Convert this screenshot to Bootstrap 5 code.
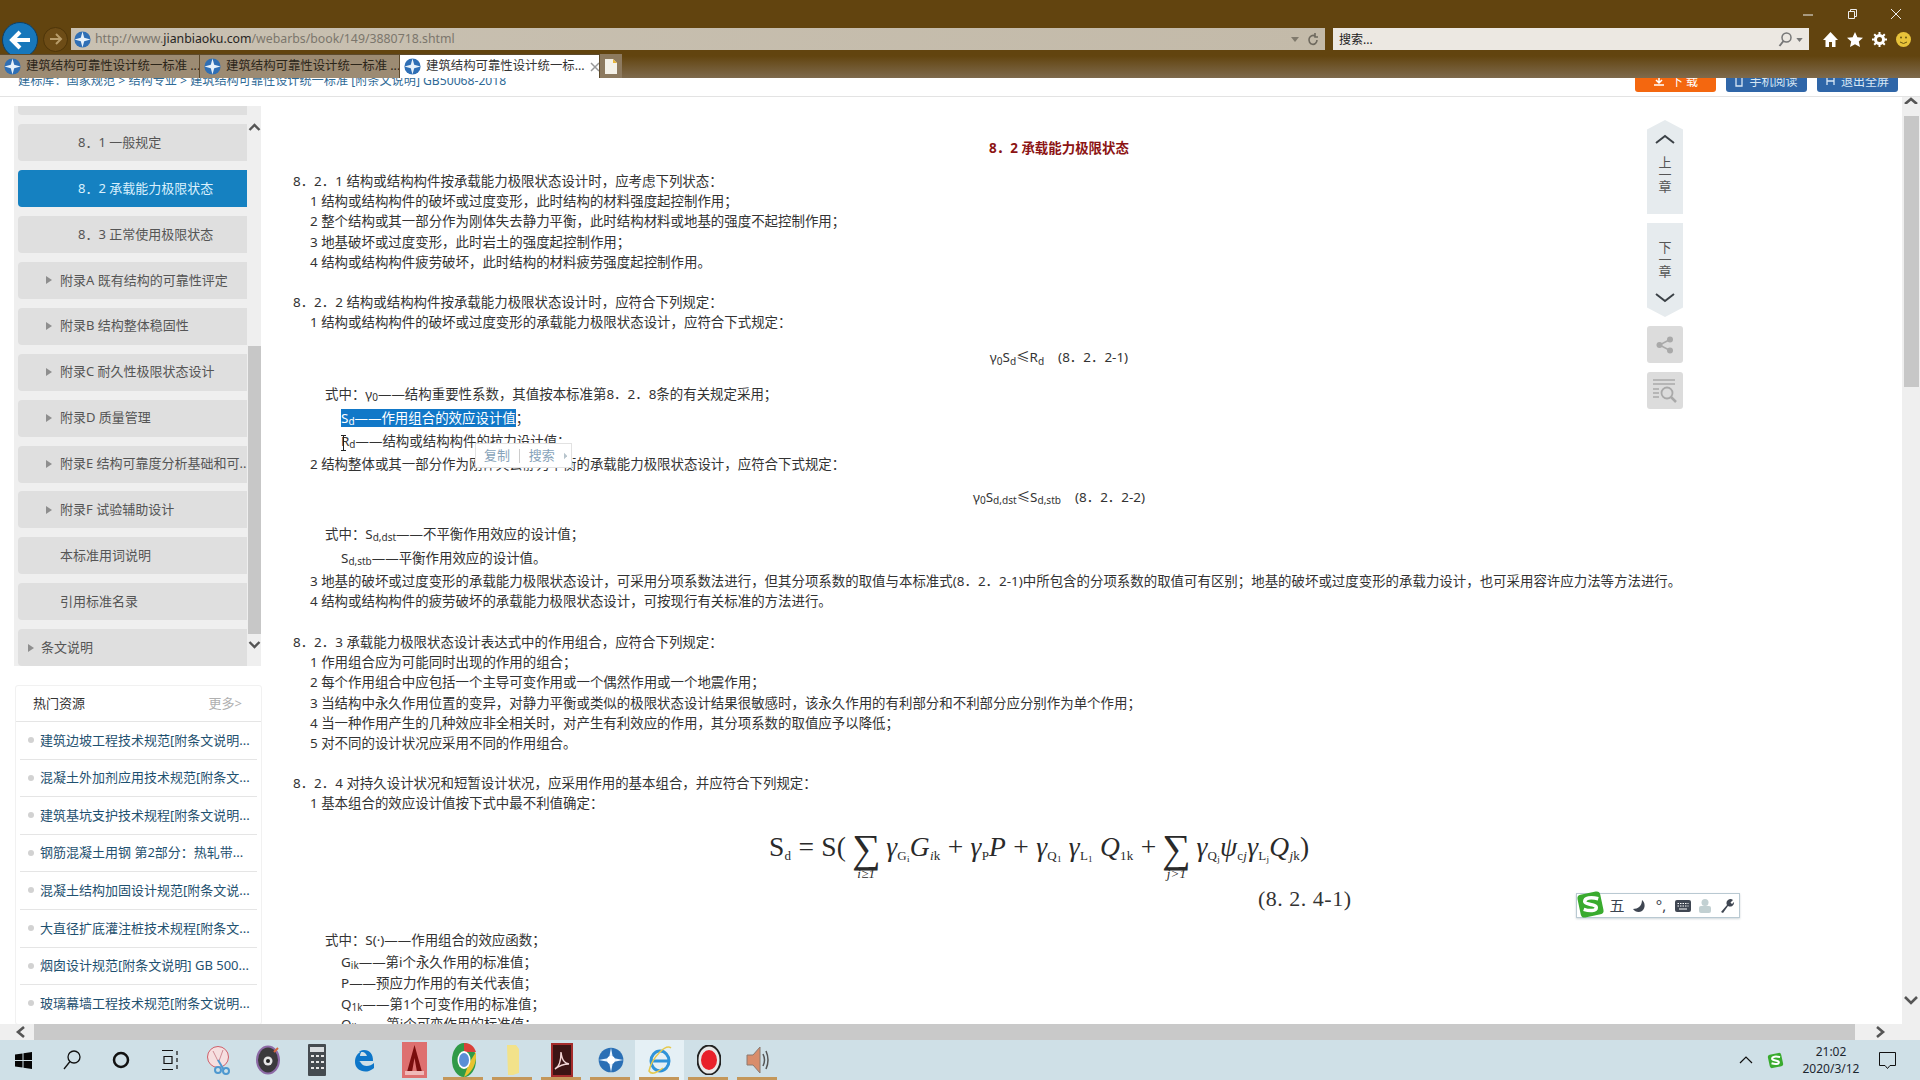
<!DOCTYPE html>
<html lang="zh">
<head>
<meta charset="utf-8">
<title>建筑结构可靠性设计统一标准</title>
<link rel="stylesheet" href="https://cdn.jsdelivr.net/npm/bootstrap@5.3.0/dist/css/bootstrap.min.css">
<style>
html,body{height:1080px;overflow:hidden}
body{width:1920px;font-family:"Noto Sans","Noto Sans CJK SC",sans-serif;font-size:13px;color:#333;background:#fff}
.shell{width:1920px;height:1080px}
.ie{height:78px;flex:none;background:linear-gradient(#62440f 0,#62440f 56px,#7e6a4d 78px)}
.winrow{height:28px;padding-right:18px;gap:32px;color:#e8e4dc}
.addr{height:22px;overflow:visible}
.backb{width:36px;height:36px;margin:-6px 5px -8px 2px;border-radius:50%;background:#1777bb;border:1px solid #0c3f66}
.fwdb{width:25px;height:25px;margin-right:3px;border-radius:50%;background:#6d4c16;border:1px solid #4e3509}
.urlbox{width:1254px;height:22px;background:linear-gradient(90deg,#c9c1b2,#c3baa9);padding:1px 6px 0 3px;font-size:12.3px;color:#7b766c}
.urlbox b{font-weight:400;color:#26241f}
.srch{width:476px;height:22px;margin-left:8px;background:#ece8e2;padding:1px 6px 0;font-size:12px;color:#222}
.tools{gap:9px;margin-left:14px}
.tabs{height:24px;margin-top:4px}
.tabx{width:200px;height:24px;background:#9c8b73;border-right:1px solid #5d4a2c;border-top:1px solid #5d4a2c;font-size:12.4px;color:#2b2519;padding:0 0 0 4px;gap:5px;white-space:nowrap}
.tabx.on{background:#fff;color:#333}
.newt{width:22px;height:24px;background:#8d7a5f}
.pg{flex:1 1 auto;min-height:0;overflow:hidden}
.crumb{height:19px;flex:none;border-bottom:1px solid #e3e3e3;padding-left:18px;overflow:hidden;color:#2f6a96;font-size:12.15px;white-space:nowrap}
.ctext{margin-top:-6px}
.topbtn{height:14px;width:81px;border-radius:0 0 3px 3px;background:#2f66a8;color:#d8e6f4;font-size:12px;line-height:8px;overflow:hidden;gap:6px}
.topbtn>*{margin-top:-6px}
.topbtn.or{background:#f4670f;color:#fff}
.btns{margin-left:auto;gap:10px;margin-right:22px;align-items:flex-start}
.mainr{flex:1 1 auto;min-height:0;overflow:hidden}
.lcol{width:247px;margin-left:14px;flex:none}
.sb{height:560px;margin-top:9px;background:#efefef;overflow:hidden}
.sblist{width:229px;margin:-28px 0 0 4px;gap:8.95px}
.sbi{height:37px;flex:none;background:#dfdfdf;border-radius:4px 0 0 4px;color:#555;font-size:13px;padding:0;white-space:nowrap;overflow:hidden}
.sbi.l1{padding-left:42px}
.sbi.lv{padding-left:60px}
.sbi.on{background:#1581c1;color:#d9f0fd}
.sbi.top{padding-left:10px}
.tri{width:0;height:0;border-left:6px solid #8e8e8e;border-top:4px solid transparent;border-bottom:4px solid transparent;margin-left:-14px;margin-right:8px}
.sbi.top .tri{margin-left:0;margin-right:7px}
.sbar{width:13px;margin-left:1px}
.sbar svg{display:block}
.sa1{margin:14px 0 -2px}
.sthumb{height:288px;width:13px;background:#c7c7c7;margin-top:214px}
.hot{margin-top:19px;border:1px solid #f1f1f1;border-radius:3px;height:340px;overflow:hidden;margin-left:1px;margin-right:-1px}
.hothd{height:36px;padding:0 19px 0 17px;border-bottom:1px solid #e5e5e5;border-radius:0;background:#fff;font-size:13px;color:#333}
.hothd span+span{color:#b0b0b0}
.hotli{margin:0 4px}
.hotit{height:37.6px;padding:0 0 0 20px;border-color:#e5e5e5;color:#1f5170;font-size:13px;white-space:nowrap;position:relative;overflow:hidden}
.hotit::before{content:"";position:absolute;left:8px;top:15px;width:6px;height:6px;border-radius:50%;background:#d2d2d2}
.art{width:1532px;margin-left:32px;flex:none;position:relative;color:#333;font-size:13.45px}
.ttl{height:20px;margin-top:41px;margin-bottom:13px;font-weight:700;color:#8c1414;text-align:center}
.ln{height:20.2px;line-height:20px;white-space:nowrap}
.tall{height:23.4px;line-height:23px}
.i1{padding-left:17px}.i2{padding-left:32px}.i3{padding-left:48px}
.gap{margin-top:20px}.gap2{margin-top:21px}
.ln sub{font-size:10px;bottom:-.2em}
.fx{height:36px;line-height:36px;text-align:center;white-space:nowrap}
.fx1{margin-top:7px}.fx2{margin-top:2px}
.m8{margin-top:8px}.m1{margin-top:1px}
.sel{background:#1178c8;color:#fff}
.frm{height:60px;margin-left:476px;margin-top:3px;font-family:"Liberation Serif",serif;font-size:27.5px;line-height:1;white-space:nowrap;color:#2a2a2a;gap:1px;letter-spacing:.25px}
.frm i{font-style:italic}
.frm sub{font-size:13px;bottom:-.3em}
.frm sub sub{font-size:9px}
.sig{width:34px;margin:0 2px;position:relative;top:9px;font-size:40px;line-height:36px;text-align:center}
.sig small{display:block;font-size:13px;line-height:13px;font-style:italic}
.enum{height:22px;margin-left:965px;margin-top:11px;font-family:"Liberation Serif",serif;font-size:22px;line-height:22px;color:#333;letter-spacing:.5px}
.c0{margin-top:19px}
.h22{height:22px;line-height:22px}
.h21{height:21px;line-height:21px}
.vbar{width:18px;flex:none;background:#efefef;margin-left:auto}
.va1{display:block}
.vthumb{width:15px;height:271px;margin:12px 0 0 2px;background:#c7c7c7}
.va2{display:block;margin-top:609px}
.hbar{height:16px;flex:none;background:#efefef}
.hthumb{width:1821px;height:16px;background:#c9c9c9}
.task{height:40px;flex:none;background:#cfe0e7}
.slot{width:49px;height:40px;flex:none;position:relative}
.slot.fst{width:47px}
.slot.run::after{content:"";position:absolute;left:4px;right:5px;bottom:0;height:3px;background:#c4975a}
.slot.cur{background:#e5f0f5}
.tray{margin-left:auto;padding-right:24px;font-size:12px;line-height:17px;color:#1d2730}
.trya{margin-right:14px}.trys{margin-right:5px}.tryn{margin-left:6px}
.clock{width:84px;text-align:center;font-size:12px}
.rail{position:absolute;left:1354px;top:23px;width:36px;gap:9px;color:#555}
.chap{height:94px;background:#e6ebee;font-size:13px;line-height:12px;text-align:center}
.chap.up{clip-path:polygon(50% 0,100% 10%,100% 100%,0 100%,0 10%);padding-top:14px}
.chap.dn{clip-path:polygon(0 0,100% 0,100% 90%,50% 100%,0 90%);padding-top:18px}
.chap span{display:block}
.cu{margin-bottom:12px}.cd{margin-top:16px}
.rbox{height:37px;background:#dcdcdc;border-radius:3px}
.pop{position:absolute;left:182px;top:346px;width:97px;height:25px;background:#fff;border:1px solid #e2e2e2;color:#88a4ba;font-size:13px;padding:0 4px 0 8px;gap:9px;white-space:nowrap}
.pop i{width:1px;height:14px;background:#ccc}
.caret{position:absolute;left:47px;top:338px}
.ime{position:absolute;left:1283px;top:796px;width:164px;height:25px;background:#fff;border:1px solid #b9c9d2;color:#3c4450;font-size:15px;gap:6px;padding-left:32px;box-shadow:0 1px 2px #cfd6da}
.ime>*{width:16px;flex:none;text-align:center}
.imelogo{position:absolute;left:1283px;top:793px}
</style>
</head>
<body>
<svg width="0" height="0" class="d-block position-absolute">
<symbol id="globe" viewBox="0 0 20 20"><circle cx="10" cy="10" r="9.500" fill="#2f6fb5"/><path d="M10 .5 12 8l7.500 2-7.500 2-2 7.500L8 12 .5 10 8 8z" fill="#e8f2fb"/></symbol>
<symbol id="ss" viewBox="0 0 30 30"><rect x="3" y="3" width="24" height="24" rx="4" fill="#39ab2e" transform="rotate(-12 15 15)"/><path d="M23 9c-8-2-14-1-14 3s12 2 12 6-7 4-13 2" fill="none" stroke="#fff" stroke-width="3.600"/></symbol>
</svg>
<div class="shell d-flex flex-column">

<div class="ie">
  <div class="winrow d-flex align-items-center justify-content-end">
    <svg width="12" height="12" viewBox="0 0 12 12"><path d="M1 7h10" stroke="#eee" stroke-width="1"/></svg>
    <svg width="12" height="12" viewBox="0 0 12 12"><path d="M2.500 3.500h6v7h-6zM4.500 3.500v-2h6v7h-2" fill="none" stroke="#eee"/></svg>
    <svg width="12" height="12" viewBox="0 0 12 12"><path d="M1 1l10 10M11 1 1 11" stroke="#eee"/></svg>
  </div>
  <div class="addr d-flex align-items-center">
    <div class="backb d-flex align-items-center justify-content-center flex-shrink-0"><svg width="24" height="22" viewBox="0 0 24 22"><path d="M12 3 4 11l8 8M4 11h18" fill="none" stroke="#fff" stroke-width="4"/></svg></div>
    <div class="fwdb d-flex align-items-center justify-content-center flex-shrink-0"><svg width="15" height="14" viewBox="0 0 15 14"><path d="M8 2l5 5-5 5M13 7H2" fill="none" stroke="#b89c6a" stroke-width="2"/></svg></div>
    <div class="urlbox d-flex align-items-center flex-shrink-0">
      <svg width="17" height="17" class="me-1"><use href="#globe"/></svg>
      <span>http://www.<b>jianbiaoku.com</b>/webarbs/book/149/3880718.shtml</span>
      <span class="ms-auto d-flex align-items-center gap-2"><svg width="8" height="5" viewBox="0 0 8 5"><path d="M0 0h8L4 5z" fill="#807a6d"/></svg><svg width="12" height="14" viewBox="0 0 12 14"><path d="M10 7a4 4.500 0 1 1-2-4M8 0v4h3" fill="none" stroke="#6e695e" stroke-width="1.600"/></svg></span>
    </div>
    <div class="srch d-flex align-items-center flex-shrink-0"><span>搜索...</span>
      <span class="ms-auto d-flex align-items-center gap-1"><svg width="14" height="15" viewBox="0 0 14 15"><circle cx="8.500" cy="5.500" r="4.500" fill="none" stroke="#777" stroke-width="1.500"/><path d="M5.500 9 1.500 14" stroke="#777" stroke-width="2"/></svg><svg width="7" height="4" viewBox="0 0 8 5"><path d="M0 0h8L4 5z" fill="#777"/></svg></span></div>
    <div class="tools d-flex align-items-center">
      <svg width="15" height="15" viewBox="0 0 15 15"><path d="M7.500 0 15 8h-2.500v7H9v-5H6v5H2.500V8H0z" fill="#fff"/></svg>
      <svg width="16" height="15" viewBox="0 0 16 15"><path d="m8 0 2.400 5.200 5.600.600-4.200 3.800 1.200 5.400L8 12.200 3 15l1.200-5.400L0 5.800l5.600-.600z" fill="#fff"/></svg>
      <svg width="15" height="15" viewBox="0 0 15 15"><circle cx="7.500" cy="7.500" r="4" fill="none" stroke="#fff" stroke-width="3"/><path d="M7.500 0v15M0 7.500h15M2.200 2.200l10.600 10.600M12.800 2.200 2.200 12.800" stroke="#fff" stroke-width="2"/><circle cx="7.500" cy="7.500" r="2.500" fill="#62440f"/></svg>
      <svg width="15" height="17" viewBox="0 0 15 17"><circle cx="7.500" cy="8.500" r="7.500" fill="#e8c33a"/><circle cx="5" cy="6.500" r="1" fill="#6b5610"/><circle cx="10" cy="6.500" r="1" fill="#6b5610"/><path d="M4 11q3.500 3 7 0" fill="none" stroke="#6b5610"/></svg>
    </div>
  </div>
  <div class="tabs d-flex">
    <div class="tabx d-flex align-items-center overflow-hidden"><svg width="17" height="17" class="flex-shrink-0"><use href="#globe"/></svg><span>建筑结构可靠性设计统一标准 ...</span></div>
    <div class="tabx d-flex align-items-center overflow-hidden"><svg width="17" height="17" class="flex-shrink-0"><use href="#globe"/></svg><span>建筑结构可靠性设计统一标准 ...</span></div>
    <div class="tabx on d-flex align-items-center overflow-hidden"><svg width="17" height="17" class="flex-shrink-0"><use href="#globe"/></svg><span>建筑结构可靠性设计统一标...</span><svg width="10" height="10" viewBox="0 0 10 10" class="flex-shrink-0"><path d="M1 1l8 8M9 1 1 9" stroke="#999" stroke-width="1.500"/></svg></div>
    <div class="newt d-flex align-items-center justify-content-center"><svg width="12" height="15" viewBox="0 0 12 15"><path d="M0 0h8l4 4v11H0z" fill="#f4f1e8"/><path d="M8 0l4 4H8z" fill="#e8b53a"/></svg></div>
  </div>
</div>

<div class="pg d-flex flex-column">
  <div class="crumb d-flex">
    <div class="ctext">建标库：国家规范 &gt; 结构专业 &gt; 建筑结构可靠性设计统一标准 [附条文说明] GB50068-2018</div>
    <div class="btns d-flex">
      <div class="topbtn or d-flex align-items-center justify-content-center"><svg width="12" height="8" viewBox="0 0 12 8"><path d="M6 0v4M3 2l3 3 3-3M1 7h10" fill="none" stroke="#fff" stroke-width="1.500"/></svg><span>下 载</span></div>
      <div class="topbtn d-flex align-items-center justify-content-center"><svg width="8" height="9" viewBox="0 0 8 9"><path d="M1 0v8h6V0" fill="none" stroke="#d8e6f4" stroke-width="1.300"/></svg><span>手机阅读</span></div>
      <div class="topbtn d-flex align-items-center justify-content-center"><svg width="9" height="8" viewBox="0 0 9 8"><path d="M1 0v7M8 0v7M1 3h7" fill="none" stroke="#d8e6f4" stroke-width="1.300"/></svg><span>退出全屏</span></div>
    </div>
  </div>
  <div class="mainr d-flex">
    <div class="lcol">
      <div class="sb d-flex">
        <div class="sblist nav flex-column flex-nowrap flex-shrink-0">
          <a class="sbi nav-link d-flex align-items-center lv"></a>
          <a class="sbi nav-link d-flex align-items-center lv">8．1 一般规定</a>
          <a class="sbi nav-link d-flex align-items-center lv on">8．2 承载能力极限状态</a>
          <a class="sbi nav-link d-flex align-items-center lv">8．3 正常使用极限状态</a>
          <a class="sbi nav-link d-flex align-items-center l1"><i class="tri"></i>附录A 既有结构的可靠性评定</a>
          <a class="sbi nav-link d-flex align-items-center l1"><i class="tri"></i>附录B 结构整体稳固性</a>
          <a class="sbi nav-link d-flex align-items-center l1"><i class="tri"></i>附录C 耐久性极限状态设计</a>
          <a class="sbi nav-link d-flex align-items-center l1"><i class="tri"></i>附录D 质量管理</a>
          <a class="sbi nav-link d-flex align-items-center l1"><i class="tri"></i>附录E 结构可靠度分析基础和可...</a>
          <a class="sbi nav-link d-flex align-items-center l1"><i class="tri"></i>附录F 试验辅助设计</a>
          <a class="sbi nav-link d-flex align-items-center l1">本标准用词说明</a>
          <a class="sbi nav-link d-flex align-items-center l1">引用标准名录</a>
          <a class="sbi nav-link d-flex align-items-center top"><i class="tri"></i>条文说明</a>
        </div>
        <div class="sbar">
          <svg class="sa1" width="13" height="14" viewBox="0 0 13 14"><path d="M1.500 10 6.500 5l5 5" fill="none" stroke="#555" stroke-width="2.400"/></svg>
          <div class="sthumb"></div>
          <svg width="13" height="14" viewBox="0 0 13 14" class="mt-1"><path d="M1.500 4l5 5 5-5" fill="none" stroke="#555" stroke-width="2.400"/></svg>
        </div>
      </div>
      <div class="hot card">
        <div class="hothd card-header d-flex align-items-center justify-content-between"><span>热门资源</span><span>更多&gt;</span></div>
        <div class="hotli list-group list-group-flush">
          <a class="hotit list-group-item d-flex align-items-center">建筑边坡工程技术规范[附条文说明...</a>
          <a class="hotit list-group-item d-flex align-items-center">混凝土外加剂应用技术规范[附条文...</a>
          <a class="hotit list-group-item d-flex align-items-center">建筑基坑支护技术规程[附条文说明...</a>
          <a class="hotit list-group-item d-flex align-items-center">钢筋混凝土用钢 第2部分：热轧带...</a>
          <a class="hotit list-group-item d-flex align-items-center">混凝土结构加固设计规范[附条文说...</a>
          <a class="hotit list-group-item d-flex align-items-center">大直径扩底灌注桩技术规程[附条文...</a>
          <a class="hotit list-group-item d-flex align-items-center">烟囱设计规范[附条文说明] GB 500...</a>
          <a class="hotit list-group-item d-flex align-items-center">玻璃幕墙工程技术规范[附条文说明...</a>
        </div>
      </div>
    </div>

    <div class="art">
      <div class="ttl">8．2 承载能力极限状态</div>
      <div class="ln">8．2．1 结构或结构构件按承载能力极限状态设计时，应考虑下列状态：</div>
      <div class="ln i1">1 结构或结构构件的破坏或过度变形，此时结构的材料强度起控制作用；</div>
      <div class="ln i1">2 整个结构或其一部分作为刚体失去静力平衡，此时结构材料或地基的强度不起控制作用；</div>
      <div class="ln i1">3 地基破坏或过度变形，此时岩土的强度起控制作用；</div>
      <div class="ln i1">4 结构或结构构件疲劳破坏，此时结构的材料疲劳强度起控制作用。</div>
      <div class="ln gap">8．2．2 结构或结构构件按承载能力极限状态设计时，应符合下列规定：</div>
      <div class="ln i1">1 结构或结构构件的破坏或过度变形的承载能力极限状态设计，应符合下式规定：</div>
      <div class="fx fx1">γ<sub>0</sub>S<sub>d</sub>≤R<sub>d</sub> &nbsp;&nbsp; (8．2．2-1)</div>
      <div class="ln tall i2 m8">式中：γ<sub>0</sub>——结构重要性系数，其值按本标准第8．2．8条的有关规定采用；</div>
      <div class="ln tall i3"><span class="sel">S<sub>d</sub>——作用组合的效应设计值</span>；</div>
      <div class="ln tall i3">R<sub>d</sub>——结构或结构构件的抗力设计值；</div>
      <div class="ln tall i1">2 结构整体或其一部分作为刚体失去静力平衡的承载能力极限状态设计，应符合下式规定：</div>
      <div class="fx fx2">γ<sub>0</sub>S<sub>d,dst</sub>≤S<sub>d,stb</sub> &nbsp;&nbsp; (8．2．2-2)</div>
      <div class="ln tall i2 m8">式中：S<sub>d,dst</sub>——不平衡作用效应的设计值；</div>
      <div class="ln tall i3 m1">S<sub>d,stb</sub>——平衡作用效应的设计值。</div>
      <div class="ln i1">3 地基的破坏或过度变形的承载能力极限状态设计，可采用分项系数法进行，但其分项系数的取值与本标准式(8．2．2-1)中所包含的分项系数的取值可有区别；地基的破坏或过度变形的承载力设计，也可采用容许应力法等方法进行。</div>
      <div class="ln i1">4 结构或结构构件的疲劳破坏的承载能力极限状态设计，可按现行有关标准的方法进行。</div>
      <div class="ln gap2">8．2．3 承载能力极限状态设计表达式中的作用组合，应符合下列规定：</div>
      <div class="ln i1">1 作用组合应为可能同时出现的作用的组合；</div>
      <div class="ln i1">2 每个作用组合中应包括一个主导可变作用或一个偶然作用或一个地震作用；</div>
      <div class="ln i1">3 当结构中永久作用位置的变异，对静力平衡或类似的极限状态设计结果很敏感时，该永久作用的有利部分和不利部分应分别作为单个作用；</div>
      <div class="ln i1">4 当一种作用产生的几种效应非全相关时，对产生有利效应的作用，其分项系数的取值应予以降低；</div>
      <div class="ln i1">5 对不同的设计状况应采用不同的作用组合。</div>
      <div class="ln gap">8．2．4 对持久设计状况和短暂设计状况，应采用作用的基本组合，并应符合下列规定：</div>
      <div class="ln i1">1 基本组合的效应设计值按下式中最不利值确定：</div>
      <div class="frm d-flex align-items-center">
        <span>S<sub>d</sub> = S(</span>
        <span class="sig">∑<small>i≥1</small></span>
        <span><i>γ</i><sub>G<sub>i</sub></sub><i>G</i><sub><i>i</i>k</sub> + <i>γ</i><sub>P</sub><i>P</i> + <i>γ</i><sub>Q<sub>1</sub></sub> <i>γ</i><sub>L<sub>1</sub></sub> <i>Q</i><sub>1k</sub> +</span>
        <span class="sig">∑<small>j&gt;1</small></span>
        <span><i>γ</i><sub>Q<sub>j</sub></sub><i>ψ</i><sub>c<i>j</i></sub><i>γ</i><sub>L<sub>j</sub></sub><i>Q</i><sub><i>j</i>k</sub>)</span>
      </div>
      <div class="enum">(8. 2. 4-1)</div>
      <div class="ln h22 i2 c0">式中：S(·)——作用组合的效应函数；</div>
      <div class="ln h22 i3">G<sub>ik</sub>——第i个永久作用的标准值；</div>
      <div class="ln h21 i3">P——预应力作用的有关代表值；</div>
      <div class="ln i3">Q<sub>1k</sub>——第1个可变作用的标准值；</div>
      <div class="ln i3">Q<sub>jk</sub>——第j个可变作用的标准值；</div>

      <div class="rail d-flex flex-column">
        <div class="chap up"><svg width="20" height="10" viewBox="0 0 20 10" class="d-block mx-auto cu"><path d="M1 9l9-7 9 7" fill="none" stroke="#3c4247" stroke-width="2"/></svg><span>上</span><span>一</span><span>章</span></div>
        <div class="chap dn"><span>下</span><span>一</span><span>章</span><svg width="20" height="10" viewBox="0 0 20 10" class="d-block mx-auto cd"><path d="M1 1l9 7 9-7" fill="none" stroke="#3c4247" stroke-width="2"/></svg></div>
        <div class="rbox d-flex align-items-center justify-content-center"><svg width="18" height="18" viewBox="0 0 18 18"><circle cx="14" cy="3.500" r="3" fill="#a9a9a9"/><circle cx="3.500" cy="9" r="3" fill="#a9a9a9"/><circle cx="14" cy="14.500" r="3" fill="#a9a9a9"/><path d="M14 3.500 3.500 9 14 14.500" fill="none" stroke="#a9a9a9" stroke-width="1.500"/></svg></div>
        <div class="rbox d-flex align-items-center justify-content-center"><svg width="26" height="26" viewBox="0 0 26 26"><path d="M1 2h22M1 6h22M1 11h6M1 15h6M1 19h6" stroke="#a9a9a9" stroke-width="1.500"/><circle cx="15" cy="15" r="5.500" fill="none" stroke="#a9a9a9" stroke-width="1.800"/><path d="m19 19 5 5" stroke="#a9a9a9" stroke-width="2.500"/></svg></div>
      </div>
      <svg class="caret" width="8" height="16" viewBox="0 0 8 16"><path d="M1 .500h5M3.500.500v15M1 15.500h5" fill="none" stroke="#222"/></svg>
      <div class="pop d-flex align-items-center"><span>复制</span><i></i><span>搜索</span><svg width="5" height="10" viewBox="0 0 5 10" class="ms-auto"><path d="M0 0l5 5-5 5z" fill="#b7c4cc"/></svg></div>
      <div class="ime d-flex align-items-center">
        <span>五</span>
        <svg width="14" height="14" viewBox="0 0 14 14"><path d="M10 1C10 7 6 10 1 10c2 3 6 4 9 2 4-3 3-9 0-11z" fill="#3f4652"/></svg>
        <span class="lh-1">°,</span>
        <svg width="16" height="12" viewBox="0 0 16 12"><rect width="16" height="12" rx="2" fill="#3f4652"/><path d="M2.500 3.500h11M2.500 6h11" stroke="#fff" stroke-dasharray="1.500 1"/><path d="M4 9h8" stroke="#fff"/></svg>
        <svg width="12" height="14" viewBox="0 0 12 14"><circle cx="6" cy="3.500" r="3.500" fill="#c2d0d2"/><rect y="7" width="12" height="7" rx="2" fill="#c2d0d2"/></svg>
        <svg width="14" height="14" viewBox="0 0 14 14"><path d="M1 13 7 6a4 4 0 0 1 6-5L10.500 3.500 12 5l2-2a4 4 0 0 1-6 4l-5 7z" fill="#3f4652"/></svg>
      </div>
      <svg class="imelogo" width="29" height="29"><use href="#ss"/></svg>
    </div>

    <div class="vbar">
      <svg class="va1" width="17" height="7" viewBox="0 0 17 7"><path d="M3 7l6-5 6 5" fill="none" stroke="#555" stroke-width="2.600"/></svg>
      <div class="vthumb"></div>
      <svg class="va2" width="17" height="10" viewBox="0 0 17 10"><path d="M3 1l6 6 6-6" fill="none" stroke="#555" stroke-width="2.600"/></svg>
    </div>
  </div>
</div>

<div class="hbar d-flex align-items-center">
  <svg width="34" height="16" viewBox="0 0 34 16" class="flex-shrink-0"><path d="M24 3l-6 5 6 5" fill="none" stroke="#555" stroke-width="2.600"/></svg>
  <div class="hthumb"></div>
  <svg width="34" height="16" viewBox="0 0 34 16" class="flex-shrink-0"><path d="M22 3l6 5-6 5" fill="none" stroke="#555" stroke-width="2.600"/></svg>
</div>

<div class="task d-flex align-items-center">
  <div class="slot fst d-flex align-items-center justify-content-center"><svg width="17" height="17" viewBox="0 0 17 17"><path d="M0 2.500 7.500 1.400V8H0zM8.500 1.200 17 0v8H8.500zM0 9h7.500v6.600L0 14.500zM8.500 9H17v8l-8.500-1.200z" fill="#050505"/></svg></div>
  <div class="slot d-flex align-items-center justify-content-center"><svg width="18" height="20" viewBox="0 0 18 20"><circle cx="11" cy="7" r="6" fill="none" stroke="#111" stroke-width="1.300"/><path d="M7 11.500 1 19" stroke="#111" stroke-width="1.300"/></svg></div>
  <div class="slot d-flex align-items-center justify-content-center"><svg width="18" height="18" viewBox="0 0 18 18"><circle cx="9" cy="9" r="7" fill="none" stroke="#111" stroke-width="2.500"/></svg></div>
  <div class="slot d-flex align-items-center justify-content-center"><svg width="18" height="20" viewBox="0 0 18 20"><path d="M1 .500h11M1 19.500h11M3 6.500h8v7H3zM16 1v4M16 8v4M16 15v4" fill="none" stroke="#111" stroke-width="1.200"/></svg></div>
  <div class="slot d-flex align-items-center justify-content-center"><svg width="26" height="30" viewBox="0 0 26 30"><circle cx="12" cy="12" r="10.500" fill="#f6dfe0" stroke="#cf5f6a"/><path d="M7 6l5 10M17 5l-4 11" stroke="#cf8b95"/><path d="M12 15l6 10" stroke="#4e98d0" stroke-width="2"/><circle cx="20" cy="26" r="3" fill="none" stroke="#4e98d0" stroke-width="2"/><circle cx="12" cy="25" r="3" fill="none" stroke="#4e98d0" stroke-width="2"/></svg></div>
  <div class="slot d-flex align-items-center justify-content-center"><svg width="26" height="30" viewBox="0 0 26 30"><ellipse cx="13" cy="15" rx="12" ry="14.500" fill="#8d6aa6"/><ellipse cx="13" cy="15" rx="10" ry="12.500" fill="#3b3a3c"/><circle cx="13" cy="16" r="4.500" fill="#e6e6e6"/><circle cx="13" cy="16" r="2" fill="#222"/><path d="M19 7l4-4" stroke="#d5663c" stroke-width="2"/></svg></div>
  <div class="slot d-flex align-items-center justify-content-center"><svg width="18" height="32" viewBox="0 0 18 32"><rect width="18" height="32" rx="1" fill="#454b50"/><rect x="2" y="3" width="14" height="5" fill="#d9dde0"/><path d="M3 12h3M8 12h3M13 12h3M3 18h3M8 18h3M13 18h3M3 24h3M8 24h3M13 24h3" stroke="#e5e5e5" stroke-width="2"/></svg></div>
  <div class="slot d-flex align-items-center justify-content-center"><svg width="22" height="24" viewBox="0 0 22 24"><path d="M2 13h16c0-7-3-11-9-11C6 2 5 3 4 4c3-1 7 0 8 4H5C5 6 6 4 7 3 3 5 0 8 0 14c0 7 7 11 14 9 2-1 4-2 5-3v-5c-4 4-11 4-13 0-1-1 0-2-4-2z" fill="#0d76c9"/></svg></div>
  <div class="slot d-flex align-items-center justify-content-center"><svg width="25" height="36" viewBox="0 0 25 36"><rect width="25" height="36" fill="#d94b4b"/><rect width="25" height="36" fill="#f0dede" opacity=".25"/><path d="M12.500 3 5 30h5l2.500-14L15 30h5z" fill="#7a0d0d"/><path d="M3 29h19v4H3z" fill="#f0b9b9"/></svg></div>
  <div class="slot run d-flex align-items-center justify-content-center"><svg width="24" height="34" viewBox="0 0 24 34"><ellipse cx="12" cy="17" rx="12" ry="17" fill="#2f9a47"/><path d="M12 0c6 0 10 3 12 9H12z" fill="#d9413a"/><path d="M24 9c1 10-3 20-12 25l5-14z" fill="#e6c22f"/><ellipse cx="12" cy="17" rx="6.500" ry="9" fill="#fff"/><ellipse cx="12" cy="17" rx="5" ry="7" fill="#5a8fd6"/></svg></div>
  <div class="slot run d-flex align-items-center justify-content-center"><svg width="14" height="32" viewBox="0 0 14 32"><path d="M1 1h9l3 4v24l-6 2H2z" fill="#f2e28a"/></svg></div>
  <div class="slot run d-flex align-items-center justify-content-center"><svg width="22" height="34" viewBox="0 0 22 34"><rect width="22" height="34" fill="#a52c2c"/><rect x="2" y="2" width="18" height="30" fill="#3d1414"/><path d="M4 26c4-2 6-9 6-17 1 8 3 11 8 12-5 0-9 1-14 5z" fill="none" stroke="#f3d6d6" stroke-width="1.400"/></svg></div>
  <div class="slot run d-flex align-items-center justify-content-center"><svg width="26" height="32" viewBox="0 0 20 20"><circle cx="10" cy="10" r="9.500" fill="#2a6fb5"/><path d="M10 .5 11.500 8.500 19.500 10l-8 1.500L10 19.500 8.500 11.500.5 10l8-1.500z" fill="#eaf5ff"/><circle cx="10" cy="10" r="3" fill="#fff"/></svg></div>
  <div class="slot run cur d-flex align-items-center justify-content-center"><svg width="24" height="30" viewBox="0 0 24 30"><ellipse cx="12" cy="16" rx="9" ry="10" fill="none" stroke="#2f93d8" stroke-width="3"/><path d="M4 16h16" stroke="#2f93d8" stroke-width="3"/><path d="M23 3C18-1 4 12 1 26c3 5 10 0 14-3" fill="none" stroke="#e6c94e" stroke-width="1.500"/></svg></div>
  <div class="slot run d-flex align-items-center justify-content-center"><svg width="24" height="30" viewBox="0 0 24 30"><ellipse cx="12" cy="15" rx="11.500" ry="14.500" fill="#e8e8e8" stroke="#222" stroke-width="2"/><ellipse cx="12" cy="15" rx="8" ry="10" fill="#e8202a"/></svg></div>
  <div class="slot run d-flex align-items-center justify-content-center"><svg width="24" height="30" viewBox="0 0 24 30"><path d="M1 10h6l7-8v26l-7-8H1z" fill="#d98d6b" stroke="#8c7a70"/><path d="M17 9q3 6 0 12M20 6q4 9 0 18" fill="none" stroke="#555" stroke-width="1.500"/></svg></div>

  <div class="tray d-flex align-items-center">
    <svg width="14" height="8" viewBox="0 0 14 8" class="trya"><path d="M1 7l6-6 6 6" fill="none" stroke="#111" stroke-width="1.200"/></svg>
    <svg width="17" height="17" class="trys"><use href="#ss"/></svg>
    <div class="clock"><div>21:02</div><div>2020/3/12</div></div>
    <svg width="17" height="17" viewBox="0 0 17 17" class="tryn"><path d="M.500.500h16v13H11l-2.500 3-2.500-3H.500z" fill="none" stroke="#111"/></svg>
  </div>
</div>
</div>
</body>
</html>
